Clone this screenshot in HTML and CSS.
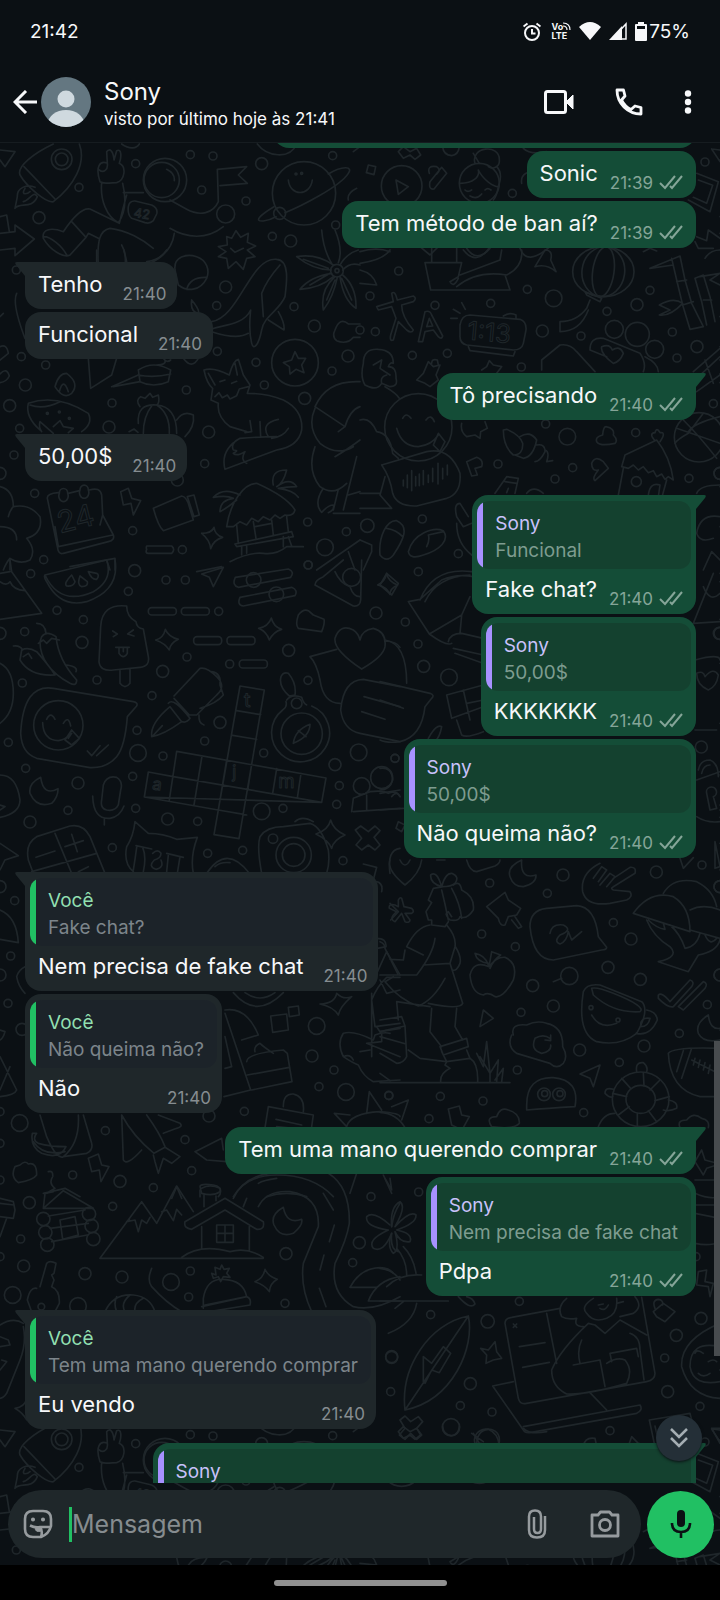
FILE: index.html
```html
<!DOCTYPE html>
<html lang="pt-BR">
<head>
<meta charset="utf-8">
<meta name="viewport" content="width=device-width, initial-scale=1">
<title>Sony</title>
<link rel="stylesheet" href="styles.css">
</head>
<body>
<svg class="defs" aria-hidden="true">
  <symbol id="ticks" viewBox="0 0 24 16"><path d="M1 9l5 5L16 2M11 12l2 2L23 2" fill="none" stroke="currentColor" stroke-width="2"/></symbol>
  <symbol id="tail-out" viewBox="0 0 24 14"><path d="M0 0H22Q25 0 23 3L14 14H0Z" fill="currentColor"/></symbol>
  <symbol id="tail-in" viewBox="0 0 24 14"><path d="M24 0H2Q-1 0 1 3L10 14H24Z" fill="currentColor"/></symbol>
</svg>
<div class="phone">
  <div class="status">
    <span class="clock">21:42</span>
    <div class="status-icons">
      <svg width="18" height="19" viewBox="0 0 18 19" fill="none" stroke="currentColor" stroke-width="2"><circle cx="9" cy="11" r="7"/><path d="M9 7v4.500h3.500M0.500 4.500l4-3M17.500 4.500l-4-3"/></svg>
      <div class="volte"><span>Vo<svg width="8" height="8" viewBox="0 0 8 8" fill="none" stroke="currentColor" stroke-width="1.200"><path d="M0 1Q7 1 7 8M0 4Q4 4 4 8"/></svg></span><span>LTE</span></div>
      <svg width="22" height="18" viewBox="0 0 22 18" fill="currentColor"><path d="M0 5Q11-5 22 5L11 18Z"/></svg>
      <svg width="18" height="18" viewBox="0 0 18 18"><path d="M0 18L13 4V18Z" fill="currentColor"/><path d="M3 17L17 2V17Z" fill="none" stroke="currentColor" stroke-width="1.500"/></svg>
      <span class="battery"><svg width="12" height="19" viewBox="0 0 12 19"><path d="M3 0H9V2H11Q12 2 12 3V18Q12 19 11 19H1Q0 19 0 18V3Q0 2 1 2H3Z" fill="currentColor"/><path d="M2 4H10V7H2Z" fill="#0b1014"/></svg>75%</span>
    </div>
  </div>
  <header class="header">
    <button class="icon-button back" aria-label="Voltar"><svg width="24" height="24" viewBox="0 0 24 24" fill="none" stroke="currentColor" stroke-width="3"><path d="M24 12H2M13 1L2 12L13 23"/></svg></button>
    <svg class="avatar" viewBox="0 0 50 50" aria-hidden="true"><clipPath id="face"><circle cx="25" cy="25" r="25"/></clipPath><g clip-path="url(#face)"><path d="M0 0H50V50H0Z" fill="#647781"/><circle cx="25" cy="22" r="8.500" fill="#cfd9df"/><ellipse cx="25" cy="47" rx="18" ry="14" fill="#cfd9df"/></g></svg>
    <div class="contact"><h1>Sony</h1><p>visto por último hoje às 21:41</p></div>
    <div class="actions">
      <button class="icon-button" aria-label="Chamada de vídeo"><svg width="30" height="24" viewBox="0 0 30 24"><rect x="1.500" y="1.500" width="20" height="21" rx="2" fill="none" stroke="currentColor" stroke-width="3"/><path d="M22 12L29 5V19Z" fill="currentColor" stroke="currentColor"/></svg></button>
      <button class="icon-button" aria-label="Chamada de voz"><svg width="28" height="28" viewBox="0 0 28 28" fill="none" stroke="currentColor" stroke-width="2.800" stroke-linejoin="round"><path d="M2 2H8.500L10 8L6.500 12Q10 19 16 21.500L20 18L26 19.500V26Q16 26 9 19Q2 12 2 2Z"/></svg></button>
      <button class="icon-button" aria-label="Mais opções"><svg width="8" height="24" viewBox="0 0 8 24" fill="currentColor"><circle cx="4" cy="3.500" r="3.200"/><circle cx="4" cy="12" r="3.200"/><circle cx="4" cy="20.500" r="3.200"/></svg></button>
    </div>
  </header>
  <main class="chat">
    <svg class="wallpaper" aria-hidden="true">
      <g transform="translate(0 -143)">
      <g id="doodles">
        <g transform="scale(.33333)">
          <path d="M0 450L45 455L15 500L0 480M160 432C100 460 50 500 60 525C80 560 140 610 160 605C220 560 260 490 238 432M72 500L165 597M105 562C80 550 50 565 52 590L45 625C60 605 95 630 112 590C100 570 90 600 70 605M75 565C60 590 85 580 90 575M0 650L20 645L28 695M0 700L45 695V675L103 717L45 767V745L0 750"/>
          <circle cx="185" cy="478" r="31"/><circle cx="185" cy="478" r="19"/><circle cx="237" cy="562" r="12"/><circle cx="117" cy="653" r="18"/><circle cx="407" cy="491" r="12"/><circle cx="571" cy="464" r="12"/><circle cx="639" cy="468" r="12"/><circle cx="605" cy="570" r="12"/><circle cx="738" cy="603" r="12"/><circle cx="785" cy="491" r="18"/><circle cx="998" cy="467" r="12"/><circle cx="1007" cy="675" r="12"/><circle cx="817" cy="709" r="12"/><circle cx="872" cy="723" r="18"/>
          <circle cx="495" cy="540" r="65"/><circle cx="485" cy="540" r="53"/><circle cx="677" cy="642" r="27"/><circle cx="912" cy="580" r="95"/><circle cx="839" cy="640" r="18"/><circle cx="888" cy="522" r="3"/><circle cx="905" cy="520" r="3"/>
          <path d="M300 545C285 500 300 480 322 490L320 455C330 442 340 455 342 480L350 452C365 445 365 470 358 490C380 500 375 540 350 548C330 550 310 550 300 545M298 510C310 520 325 510 322 490M305 548C300 600 320 650 355 668C375 640 380 600 368 550M370 578H430M380 585C370 620 365 640 358 670L270 627C240 620 200 680 190 695C150 680 125 690 130 715C150 750 190 775 210 765L258 712L265 700L295 715M215 665L258 712M132 710C150 710 185 735 200 765M295 800C290 720 300 690 330 685C380 690 430 720 460 745M365 735Q380 760 375 800M510 600L560 628C600 650 640 640 655 605L652 508L740 500L715 525L742 550L660 557M510 685C560 715 620 720 670 680M523 700Q515 760 450 790M500 508Q525 520 523 542M385 620Q388 602 405 603L455 615Q475 625 470 642L460 662Q450 672 435 668L395 655Q382 645 385 620M985 522C1030 495 1060 500 1045 520C1020 560 900 620 855 638M822 620C780 645 760 665 790 663Q810 660 828 650M865 540C870 590 930 590 937 540M680 710L695 715L708 692L722 712L745 700L742 727L767 738L742 750L765 770L740 775L730 808L708 785L685 805L680 775L655 770L678 755L655 740L682 735ZM692 745L705 757L730 745M365 432C390 450 410 445 418 432M772 432C800 470 870 480 890 432M1060 455L1080 440M1045 600Q1040 580 1070 565"/>
          <text x="400" y="650" font-size="38" transform="rotate(10 400 650)">42</text>
        </g>
        <g transform="translate(360 0) scale(.33333)">
          <path d="M25 495L47 500L42 524L19 518ZM108 540L145 560L115 583ZM115 455L130 440L150 455L170 445L182 465L165 478L150 465L130 475ZM248 440Q250 465 275 467Q295 465 298 440M210 545L245 502L260 520L222 567Q205 570 210 545M208 520Q200 495 230 500Q245 510 230 522M345 490C330 440 420 430 418 480C420 500 400 510 385 500M340 460L358 490M300 550C340 550 360 530 355 510C370 540 400 560 415 560M315 570q8 8 20 0M375 570q8-8 18 0M330 588Q350 600 365 582M410 500Q430 520 415 560Q410 590 400 600M485 550C480 520 510 510 530 518M490 445Q510 465 560 455M1010 520L1075 545L1050 635L985 600M1015 540L1058 556L1040 610L1000 592M1055 447L1080 450M1055 447L1080 485M1010 710L1040 722L1045 690L1080 715M1005 725L1015 745H1060M0 755Q50 740 90 755M180 740L210 765L235 740M310 750Q350 800 390 740M480 745Q500 800 570 740M850 755l20-10l20 8"/>
          <circle cx="125" cy="558" r="61"/><circle cx="358" cy="550" r="60"/><circle cx="457" cy="580" r="12"/><circle cx="1035" cy="486" r="12"/>
        </g>
        <g transform="translate(0 250) scale(.33333)">
          <path d="M525 60C520 20 560 10 590 20C620 30 630 60 620 85C600 125 560 125 535 105ZM560 118Q570 80 620 82M635 215C720 200 750 20 830 28C870 30 860 100 855 140C840 180 790 200 785 240C775 290 760 300 755 280C745 240 750 200 752 180C730 230 650 225 630 240M635 245C680 260 720 265 745 250M840 45Q800 90 785 130L790 200M835 185Q855 220 852 240L805 210M290 0V35M372 0L380 35M500 0Q480 30 440 35M1005 240Q1020 200 1045 222H1080M1080 262H1060Q1040 285 1010 272Q995 260 1005 240M575 150Q600 180 595 190Q570 185 575 150M265 325L272 415L335 375L350 325M335 410L415 375M340 410L420 395M50 130Q35 160 75 265M0 200L10 190M0 330L25 310Q20 280 0 290M0 372Q20 350 28 378Q20 395 0 398"/>
          <path d="M1000 45Q950 10 890 20Q940 60 993 60M995 70Q930 80 900 118Q960 115 1000 80M1003 82Q960 120 970 180Q1000 140 1012 82M1020 80Q1030 150 1068 175Q1070 110 1028 75M1020 45Q1040 10 1075 0M1028 60Q1050 35 1080 45M995 40Q970 0 965-60M1015 38Q1030 0 1005-60M910 28L985 55M930 105L990 70M980 150L1005 90M1055 150L1025 85"/>
          <path d="M85 460Q170 430 265 490Q280 520 245 545M85 460Q75 500 120 540M90 465Q130 480 180 455M165 410Q175 370 200 370Q240 400 215 430Q190 450 165 410M178 425Q190 380 205 425M120 515L160 550M120 515Q115 530 125 545M160 530L180 512L190 530L220 535L205 548M415 520Q410 460 470 465Q530 470 530 550M455 468Q430 500 430 550M470 465Q510 490 508 550M420 470Q405 450 422 440L435 445L450 430L458 442L475 435Q480 460 470 465M530 510Q550 480 580 495Q585 530 555 560M387 545l15-8l12 10M415 360Q460 330 512 360L505 395Q460 415 420 395ZM415 375Q460 385 512 372M470 345Q500 345 495 330M490 325Q500 340 512 330M550 325Q575 360 595 325"/>
          <path d="M612 360Q640 350 688 375Q700 330 715 328L730 375L750 405L742 430Q800 430 850 450Q910 480 905 540Q895 590 830 600L675 658Q660 600 720 565Q780 560 830 560M612 360Q620 400 638 415L633 450L655 460Q650 500 690 530L740 545M625 370L645 405M705 340L712 375M645 440l12-12l10 15l15-8l8 12l20-10l8-20L745 410M720 565Q690 580 700 600Q720 600 700 610Q710 620 735 605Q720 630 740 640M750 512L755 545L735 548M780 515L782 560M805 560Q780 520 835 508M815 565Q850 560 865 535M660 395l15-5M695 400l15-6"/>
          <path d="M945 470Q980 390 1080 395M945 470L1035 530Q1050 480 1080 470M1035 530L1015 545M945 475Q920 530 960 580Q1010 620 1060 590M1005 620Q1040 600 1080 570M945 590Q920 660 960 710Q1000 740 1040 700M1070 620L1030 780M1000 790H1080M970 715Q940 760 965 787Q985 765 1000 765Q1005 780 985 788M1015 718L1000 780M1080 725L1045 735"/>
          <path d="M142 745Q140 730 175 728M205 730L238 722M268 720Q300 710 305 735L308 795L340 855Q345 870 325 875L190 910Q175 915 172 890L142 745M165 830L175 890L338 855M308 795L300 825M178 730a14 17 0 1 0 25 0a12 14 0 1 0-25 0M240 720a14 17 0 1 0 25 0a12 14 0 1 0-25 0M362 725L385 715L395 745L422 752L400 795L393 760L370 765ZM460 775L545 738Q560 740 568 770L580 810L490 842Q475 830 460 775M562 740L582 735L598 795L582 800ZM605 850Q635 850 642 832Q645 855 668 862Q640 870 632 896Q630 870 605 850M440 898a12 12 0 0 1 0-10H515q12 10 0 22H445q-10 0-5-12"/>
          <path d="M680 830C690 760 730 700 770 700Q860 740 885 780Q880 800 855 795L840 805L825 795L810 810L790 800L775 815L755 805L740 825L720 815L700 830ZM705 882L875 845L880 860L710 890ZM710 825L715 880M760 815L768 865M815 810L820 855M860 800L865 845M765 830L815 820M725 890V915M740 885V910M850 860V890M865 860L875 888M690 935Q750 905 790 910Q830 915 860 890H910M820 705Q810 660 860 660Q850 700 830 710Q870 680 890 710Q860 710 835 715Q880 720 895 742M720 735Q670 710 640 742Q680 735 700 745Q660 750 660 785Q680 775 710 750"/>
          <path d="M0 710Q40 720 40 770Q90 760 120 800Q130 850 80 865Q110 900 90 930Q60 945 30 925Q20 935 10 960M0 830Q50 830 50 870M25 800Q30 780 40 770M30 925V960M210 950L345 925V960M320 930L330 960M590 965l75-15M950 960L1080 870M1045 905L1065 960"/>
          <text x="180" y="850" font-size="90" transform="rotate(-14 180 850)">24</text>
          <circle cx="1011" cy="62" r="19"/><circle cx="1011" cy="62" r="6"/><circle cx="677" cy="111" r="18"/><circle cx="650" cy="167" r="12"/><circle cx="882" cy="170" r="12"/><circle cx="943" cy="228" r="18"/><circle cx="885" cy="338" r="70"/><path d="M885 305L895 325L917 325L905 345L912 368L888 358L870 372L868 350L850 338L875 330Z"/><circle cx="652" cy="304" r="12"/><circle cx="768" cy="337" r="12"/><circle cx="793" cy="405" r="12"/><circle cx="996" cy="363" r="12"/><circle cx="1044" cy="318" r="18"/><circle cx="914" cy="445" r="18"/><circle cx="64" cy="320" r="12"/><circle cx="137" cy="345" r="12"/><circle cx="76" cy="405" r="18"/><circle cx="29" cy="467" r="18"/><circle cx="59" cy="535" r="12"/><circle cx="336" cy="459" r="12"/><circle cx="327" cy="531" r="18"/><circle cx="559" cy="420" r="12"/><circle cx="626" cy="546" r="18"/><circle cx="614" cy="641" r="12"/><circle cx="42" cy="615" r="12"/><circle cx="0" cy="670" r="18"/><circle cx="104" cy="730" r="12"/><circle cx="398" cy="842" r="12"/><circle cx="547" cy="899" r="12"/><circle cx="131" cy="929" r="12"/><circle cx="923" cy="816" r="12"/><circle cx="975" cy="892" r="25"/><circle cx="1039" cy="845" r="12"/><circle cx="924" cy="945" r="12"/><circle cx="532" cy="690" r="18"/><circle cx="142" cy="490" r="3"/><circle cx="178" cy="486" r="3"/><circle cx="208" cy="505" r="3"/><circle cx="49" cy="60" r="12"/>
        </g>
        <g transform="translate(360 250) scale(.33333)">
          <path d="M0 40Q70 30 90 0M0 60Q40 70 50 105L0 100M195 38H305L295 80L270 95Q280 115 295 85M195 38L212 120H450L435 75M300 75L420 30L425 0M290 110Q350 60 440 75Q490 50 485 0M215 38V-30M290 38V-30M320-5Q350 40 390-5M525 50L555 0Q580 0 572 30L588 65Q560 40 525 50"/>
          <ellipse cx="730" cy="65" rx="92" ry="75"/><ellipse cx="730" cy="65" rx="32" ry="75" transform="rotate(8 730 65)"/><ellipse cx="730" cy="65" rx="64" ry="75" transform="rotate(8 730 65)"/>
          <path d="M675 125L725 145L720 155L680 135ZM690 150L680 175Q650 215 600 215V245Q660 245 685 180M870 55L960 18L975 90L995 160L1030 230L990 238L968 165L950 90L935 25M870 55L940 45M950 95L980 90M968 165L1000 155M1005 85L1030 75L1050 140L1065 215M1005 85L1025 155L1040 225M1030 150H1055M898 165Q940 140 968 160Q930 200 898 195L930 180ZM1020 80L1080 70L1050 90L1080 105M1035 25Q1050 0 1080 0"/>
          <path d="M50 170L100 155L95 130Q105 120 112 150L160 138Q172 145 160 155L125 165Q125 200 160 240Q155 252 140 240L115 215L100 270Q88 275 92 255L108 205L95 170L55 180ZM175 275L195 185Q210 180 215 195L248 258Q245 270 235 260L220 240L195 245L188 275ZM200 230L208 205L218 228ZM280 178L300 190M305 158L316 178M272 205H292M300 225Q305 195 330 195L480 208Q500 215 498 240L490 280Q485 300 460 300L320 285Q298 280 300 255ZM325 290L330 302L460 318L465 305M430 198Q450 185 468 195V208"/>
          <text x="320" y="268" font-size="76" transform="rotate(5 320 268)">1:13</text>
          <path d="M10 340Q10 295 55 298Q100 300 100 340Q90 335 85 350Q110 350 108 385Q115 410 90 410L65 400Q50 425 15 405Q0 380 10 340M40 345L65 330L60 355L90 375M80 375Q60 380 65 400M75 410Q110 430 118 445M205 335L220 350L240 345L228 375L235 390L210 410L195 400L170 390L190 370ZM215 340Q215 325 232 330L235 345M365 360L380 350L388 332L400 345L425 350L410 370M545 360V330L600 285Q630 280 650 305L705 365M690 300Q690 260 730 265L840 310Q860 340 850 365M690 300L740 320M760 340Q720 310 725 290Q750 280 757 300Q780 285 790 310Q780 335 760 340M855 320Q895 340 895 365M1000 365L1080 295M1010 385L1080 320M1010 425L1080 375M1035 330L1060 400"/>
          <circle cx="763" cy="238" r="27"/><circle cx="832" cy="253" r="36"/><circle cx="884" cy="298" r="27"/><circle cx="116" cy="63" r="12"/><circle cx="30" cy="138" r="12"/><circle cx="225" cy="166" r="12"/><circle cx="392" cy="160" r="12"/><circle cx="502" cy="118" r="12"/><circle cx="581" cy="145" r="25"/><circle cx="741" cy="184" r="12"/><circle cx="831" cy="164" r="18"/><circle cx="870" cy="121" r="12"/><circle cx="937" cy="246" r="12"/><circle cx="1011" cy="290" r="18"/><circle cx="951" cy="324" r="12"/><circle cx="663" cy="258" r="12"/><circle cx="547" cy="243" r="18"/><circle cx="484" cy="351" r="12"/><circle cx="157" cy="316" r="12"/><circle cx="262" cy="310" r="12"/><circle cx="46" cy="245" r="12"/><circle cx="0" cy="240" r="12"/>
          <circle cx="175" cy="532" r="101"/><path d="M128 505q10-20 25 0M198 510q15-20 25 5M110 535Q125 590 175 590Q215 585 235 555M220 585L235 550L255 575L240 605ZM65 645Q150 620 200 605Q270 590 300 670Q305 730 260 745L170 768Q110 770 98 730Q90 680 65 645M130 690v18M142 675v38M155 662v60M167 680v28M178 672v35M190 662v42M205 675v22M218 655v40M234 640v62M248 655v32M262 645v30M0 510Q30 500 50 545Q90 550 98 610L115 625M75 680L60 735L95 775H0M0 730H60M305 520Q300 545 320 560L345 555L360 565L362 545L382 535L375 515M430 540L440 538Q480 555 488 580Q490 615 460 615Q430 590 430 540M480 560Q510 540 530 570Q520 620 490 625L465 615M530 585Q555 580 555 605Q540 635 525 635M555 600Q570 605 560 635L578 632M320 635L350 622Q372 630 365 650L345 655L352 675L335 678ZM695 640Q705 615 730 635L745 655L705 692Q695 685 715 660Q695 665 695 640M710 575Q705 560 728 555Q730 530 738 530Q765 535 760 555Q775 570 765 580Q720 590 710 575M785 650L795 615L890 570Q930 620 940 690L925 680L915 688L905 672L890 680L880 662L865 668L850 650L835 660L820 645L805 655ZM790 655L775 735M920 690L905 745M865 735Q870 695 900 705L895 740M885 572Q865 550 885 548Q890 530 900 548Q920 545 900 575M405 730L440 680L475 685L465 730M435 695L470 700M445 715L440 728M500 730Q520 705 550 730M1010 730Q1020 705 1080 705"/>
          <circle cx="829" cy="695" r="15"/><circle cx="1017" cy="562" r="74"/><path d="M950 535L1080 580M970 510Q1020 560 1070 625M1030 490L985 550Q950 570 945 580M1080 500Q1000 520 985 545"/>
          <circle cx="557" cy="522" r="12"/><circle cx="622" cy="560" r="25"/><circle cx="827" cy="548" r="12"/><circle cx="414" cy="642" r="12"/><circle cx="585" cy="687" r="12"/><circle cx="638" cy="653" r="12"/><circle cx="987" cy="685" r="12"/><circle cx="1060" cy="461" r="12"/><circle cx="1080" cy="670" r="18"/><circle cx="22" cy="827" r="20"/><circle cx="187" cy="807" r="12"/><circle cx="295" cy="911" r="12"/>
          <path d="M60 915C55 860 80 810 110 812C150 830 130 870 100 915Q80 940 60 915M80 835Q110 840 128 860M145 905C160 850 220 830 250 842C270 870 240 900 190 915Q150 930 145 905M200 890Q210 870 205 855L250 845M290 800L310 830L335 820M290 800Q280 760 300 760L325 800M290 820Q290 880 335 915M0 870L35 885V905L10 960M1080 800Q1020 790 1010 850Q1020 880 1060 865M1080 930L1055 905L1030 960"/>
        </g>
        <g transform="translate(0 560) scale(.33333)">
          <path d="M30 0L35 35L125 160L0 178M0 40L30 35M0 65Q20 80 30 65Q40 90 75 92M135 45L320 0Q340 60 280 95Q180 140 135 45M135 45Q130 50 140 65Q180 145 260 125Q360 90 345 0M215 45Q190 70 200 78Q220 80 225 65ZM240 48Q230 75 245 80Q265 80 262 65ZM265 35Q275 60 290 58Q300 45 290 40ZM605 42L670 22L640 80L628 52ZM706 52L865 27Q885 35 872 52L715 82Q695 75 706 52M720 112L875 82Q895 90 885 107L730 138Q710 135 720 112M945 75Q945 60 970 50L1030 0M945 75L1060 138Q1080 140 1082 120L1085 0M1005 35Q1020 70 1050 80Q1060 110 1080 110M1133 75Q1155 65 1160 40Q1165 65 1193 75Q1170 85 1170 103Q1160 80 1133 75"/>
          <rect x="445" y="143" width="84" height="22" rx="10"/><rect x="544" y="143" width="84" height="22" rx="10"/><rect x="581" y="230" width="84" height="24" rx="10"/><rect x="681" y="230" width="84" height="24" rx="10"/><rect x="718" y="300" width="84" height="24" rx="10"/><circle cx="656" cy="154" r="12"/><circle cx="689" cy="312" r="12"/><circle cx="761" cy="60" r="22"/><circle cx="829" cy="103" r="22"/><circle cx="1055" cy="52" r="27"/>
          <path d="M467 240Q490 235 496 208Q505 230 535 238Q510 250 508 270Q495 250 467 240M776 205Q805 200 814 174Q820 200 845 208Q820 215 808 240Q800 215 776 205M895 165Q910 145 925 152L940 165L972 178Q975 190 965 215L895 205Q885 195 895 165M380 138Q305 130 302 200L297 305Q300 335 340 330L420 322Q450 320 445 290L430 207Q410 205 408 185Q380 170 380 138M360 330V370Q375 390 390 370V328M338 213L352 222L340 230M400 210L383 222L402 228M347 262H388M357 262V280Q370 300 382 280V262M370 262V275"/>
          <path d="M125 230Q140 210 168 230Q175 300 230 360Q230 380 210 370Q120 320 120 245ZM110 190Q135 190 138 220M115 250L130 240L140 250L155 235L178 240M65 270Q85 260 110 275Q150 320 165 345Q90 350 60 300ZM40 258Q60 255 68 270M70 290L85 280L95 295M200 315Q235 320 228 335M0 310Q40 330 40 400Q40 460 0 490"/>
          <path d="M62 520Q70 370 160 385L400 425Q415 428 410 438L382 470Q375 560 350 590Q320 625 270 623L110 595Q65 580 62 520M140 478q12-25 25 0M190 490q15-25 22 8M128 488Q130 540 175 542Q200 538 210 520M195 540L215 510L238 535L215 555ZM205 535L215 520M262 573L275 587L300 557M290 587L325 555"/><circle cx="175" cy="496" r="74"/>
          <path d="M455 530Q450 490 510 440L545 485Q490 525 455 530M458 528L487 497M505 430Q520 410 570 475Q560 490 545 485M522 408L600 325Q620 320 650 350Q680 380 650 405L590 465L568 465L522 415M635 335Q665 340 660 375L670 405Q650 430 600 445M597 465Q595 490 612 495"/>
          <path d="M720 378L793 390L717 836L642 824ZM710 452L782 464M698 526L770 538M530 574L978 654L965 727L433 711L445 636L520 650M530 574L508 720M606 588L582 735M680 600L655 750L727 762M755 613L743 690M830 626L818 700M903 640L892 714M520 650L965 727M433 711L740 765"/>
          <text x="732" y="440" font-size="60">t</text><text x="697" y="655" font-size="50">j</text><text x="455" y="688" font-size="50" transform="rotate(8 455 688)">a</text><text x="835" y="685" font-size="56">m</text>
          <path d="M843 350Q850 335 865 340Q890 370 885 405L868 408Q835 380 843 350M860 420Q875 400 905 412Q910 430 920 435M858 425Q862 440 850 448M880 550Q885 510 930 493Q930 530 880 550M895 512L918 530M848 450A87 87 0 1 0 935 438M930 290L1010 268M930 290Q950 310 960 360Q970 430 1020 430M1155 243Q1190 245 1200 262M1085 327Q1000 270 1005 235Q1020 190 1060 210Q1075 220 1080 240Q1085 210 1120 205Q1160 215 1155 260Q1150 290 1085 327M1200 380L1090 358Q1030 360 1022 450Q1030 510 1080 520L1200 545M1092 410L1200 440M1085 455L1155 478"/><circle cx="905" cy="521" r="62"/><circle cx="890" cy="430" r="16"/>
          <path d="M0 645Q50 645 60 720Q60 760 0 772M0 735L15 740L0 750M122 652Q85 670 90 700Q110 745 155 730Q175 710 174 686Q130 710 122 652M305 720L310 675Q320 645 350 652Q370 665 362 690L355 735Q345 755 320 750Q300 745 305 720M278 708Q280 780 330 775Q360 770 372 738M313 775V795M85 900Q75 850 110 830L210 798Q250 790 270 830L315 940M85 900L100 940M165 820L215 940M95 935L290 880M108 892L165 873M195 860L250 842M215 823L232 875M235 935L265 920M0 850L55 887L15 900L0 930"/>
          <path d="M400 935Q370 910 380 860Q400 830 405 785L445 820Q490 820 530 838L592 832Q570 890 580 940M408 857L455 867M428 862Q440 890 430 935M410 862Q405 900 400 930M500 880L550 892M505 885L500 935M540 890L532 940M458 880q15-15 25 0q0 15-20 20q-20 20 5 28q25-5 15-28M620 940Q680 850 748 940M645 920Q660 905 690 908M785 940Q770 860 780 830Q800 800 850 800L930 790Q965 800 985 870Q990 910 980 940M885 785Q905 765 940 785M948 822Q985 810 992 780Q1000 810 1035 825Q1000 840 995 865Q985 840 948 822M1066 810L1082 798L1105 815L1125 798L1140 812L1122 832L1140 855L1125 870L1105 855L1085 870L1068 855L1085 835ZM1090 912L1130 922L1120 960M1200 865Q1160 870 1170 940M1055 755L1060 715L1110 695M1060 755L1200 745M1100 705V748M1110 695Q1150 690 1165 700Q1190 690 1200 710"/>
          <circle cx="881" cy="885" r="53"/><circle cx="881" cy="885" r="34"/><circle cx="819" cy="836" r="14"/><circle cx="1085" cy="678" r="25"/><circle cx="1145" cy="653" r="33"/>
          <circle cx="92" cy="41" r="12"/><circle cx="404" cy="32" r="18"/><circle cx="385" cy="94" r="12"/><circle cx="498" cy="60" r="12"/><circle cx="556" cy="60" r="12"/><circle cx="171" cy="151" r="12"/><circle cx="250" cy="179" r="12"/><circle cx="74" cy="215" r="12"/><circle cx="246" cy="247" r="18"/><circle cx="0" cy="220" r="18"/><circle cx="291" cy="360" r="12"/><circle cx="67" cy="369" r="12"/><circle cx="488" cy="334" r="18"/><circle cx="561" cy="291" r="12"/><circle cx="456" cy="407" r="12"/><circle cx="411" cy="511" r="12"/><circle cx="660" cy="487" r="18"/><circle cx="614" cy="543" r="12"/><circle cx="414" cy="579" r="25"/><circle cx="489" cy="588" r="12"/><circle cx="398" cy="649" r="12"/><circle cx="407" cy="745" r="12"/><circle cx="234" cy="669" r="18"/><circle cx="77" cy="625" r="12"/><circle cx="25" cy="547" r="12"/><circle cx="204" cy="751" r="12"/><circle cx="90" cy="786" r="18"/><circle cx="337" cy="863" r="12"/><circle cx="503" cy="777" r="18"/><circle cx="593" cy="784" r="12"/><circle cx="623" cy="880" r="12"/><circle cx="728" cy="871" r="12"/><circle cx="785" cy="754" r="25"/><circle cx="849" cy="745" r="12"/><circle cx="791" cy="579" r="12"/><circle cx="866" cy="271" r="18"/><circle cx="924" cy="361" r="12"/><circle cx="1128" cy="159" r="18"/><circle cx="925" cy="15" r="12"/><circle cx="1076" cy="577" r="25"/><circle cx="1005" cy="614" r="18"/><circle cx="1018" cy="677" r="12"/><circle cx="1010" cy="733" r="12"/><circle cx="1029" cy="902" r="12"/><circle cx="1185" cy="595" r="12"/>
        </g>
        <g transform="translate(380 560) scale(.33333)">
          <path d="M0 75L20 40L55 70L35 105ZM120 120Q160 20 275 35M135 125Q170 50 270 45M85 125L120 118L185 60Q230 40 280 50M85 125L148 222L245 165L240 220M148 222Q200 260 215 250M205 245Q210 220 245 220L310 235M220 265L310 285M225 280L305 308M245 165L270 110M15 240Q80 250 80 370M0 365L150 400Q165 405 155 415L135 440Q125 530 60 545Q20 550 0 540M0 420L70 445M200 405L310 375M200 405L215 475L310 440M250 390L270 480M230 480L245 525Q260 535 310 515M260 430L310 420M145 535Q170 490 185 500Q180 530 165 545M0 625Q35 620 38 660Q30 690 0 690M0 700L60 690M0 750L70 745M35 710Q50 690 60 710M55 785L75 795L65 815L48 805Z"/>
          <path d="M1000 40L940 190L1020 185M970 80Q990 130 1020 100M945 300Q1020 280 1020 300M945 510H1010M950 340Q970 330 975 350Q1000 320 1015 345Q1010 380 985 390Q950 375 950 340M955 630Q960 600 990 600Q1015 610 1015 650M965 640Q970 615 990 615M950 660L1020 635M980 700a15 15 0 1 1 20 10L1010 745L990 750ZM950 770Q980 790 1020 785M900 895L910 925L940 893M1005 845L1020 920L1005 925Z"/>
          <circle cx="115" cy="35" r="12"/><circle cx="76" cy="186" r="12"/><circle cx="114" cy="252" r="12"/><circle cx="131" cy="319" r="18"/><circle cx="207" cy="352" r="25"/><circle cx="45" cy="595" r="12"/><circle cx="964" cy="561" r="18"/><circle cx="1018" cy="220" r="18"/>
        </g>
        <g transform="translate(0 860) scale(.33333)">
          <path d="M0 150Q50 170 55 248L0 238M75 320Q55 330 50 350Q55 380 75 400M0 510L15 515Q10 535 0 540M0 590L50 690Q45 705 0 710M30 620L0 690M1170 130L1195 155L1172 180M1130 65Q1150 70 1145 95M1130 235Q1160 235 1158 260L1132 265M1130 340L1160 275L1200 345M1200 352H1160Q1130 380 1115 420L1125 500L1200 490M1115 400V590M1130 500L1140 515L1200 505M1140 360L1160 400L1200 390M1170 520Q1150 515 1125 525L1120 540Q1060 510 1030 520Q1010 550 1030 590Q1060 610 1075 615Q1090 650 1120 665L1200 660M1030 590Q1050 580 1060 600M1145 520V545L1100 550L1200 590M1080 575L1110 570"/>
          <path d="M700 398Q770 480 850 398M735 398Q780 430 825 398M960 432Q1005 430 1010 400Q1030 420 1055 410Q1020 440 1015 465Q1000 440 960 432M675 450Q740 440 775 525L725 540M675 460L752 690L672 710M675 530L695 620L675 625M765 575Q760 560 780 550Q790 560 820 580M740 605Q740 580 850 570L862 580L876 665L755 690M742 645L868 622M812 468L860 462L865 510L818 517ZM865 442L895 438L898 465L868 470ZM795 803L805 740L940 765L935 800M828 778L905 795M830 800L880 805M850 740Q850 700 880 702Q915 710 910 755M1003 760L1050 765M1003 760L1040 800M1108 695L1100 760M1108 695L1145 750M1040 800Q1050 760 1140 755Q1200 760 1200 770M120 765L140 830Q170 900 190 890L260 880Q280 870 275 850L250 765M190 890Q240 850 235 765M365 765L370 900Q380 920 425 870M365 765Q400 830 462 880M440 765Q480 820 495 860M475 765L540 790Q550 800 530 805L490 820M462 880L495 862L540 890L515 910L490 895L475 940L465 905L460 885M97 820Q90 860 125 880Q180 900 198 860Q150 860 115 850Q95 840 110 820ZM100 845Q130 890 195 875M585 875L665 835L670 870M585 875L620 900L680 905M265 895L295 882L305 915L327 920L303 965L298 930L275 935ZM60 915Q75 900 85 912Q110 905 110 945Q100 960 55 968Q30 950 45 920ZM145 935Q160 930 158 950Q145 970 165 985L140 1000M130 1000L195 985L240 1010M605 985Q630 970 660 985Q665 1000 655 1010M600 990V1010M515 1015L530 980L545 1015M700 1010Q740 945 830 945Q940 945 1000 1010M775 970Q790 960 830 955M800 1010Q860 990 920 1010M1050 1000L1070 940M1175 1000L1150 945"/>
          <circle cx="44" cy="122" r="12"/><circle cx="32" cy="288" r="12"/><circle cx="0" cy="345" r="18"/><circle cx="24" cy="430" r="12"/><circle cx="66" cy="508" r="18"/><circle cx="0" cy="80" r="18"/><circle cx="950" cy="498" r="25"/><circle cx="936" cy="588" r="18"/><circle cx="1002" cy="630" r="12"/><circle cx="957" cy="680" r="12"/><circle cx="1038" cy="696" r="25"/><circle cx="1166" cy="706" r="12"/><circle cx="733" cy="754" r="12"/><circle cx="627" cy="768" r="18"/><circle cx="59" cy="789" r="25"/><circle cx="316" cy="812" r="12"/><circle cx="555" cy="839" r="12"/><circle cx="575" cy="932" r="12"/><circle cx="218" cy="945" r="12"/><circle cx="360" cy="964" r="18"/><circle cx="460" cy="983" r="12"/><circle cx="0" cy="850" r="12"/><circle cx="0" cy="755" r="12"/><circle cx="0" cy="960" r="12"/>
        </g>
        <g transform="translate(380 860) scale(.33333)">
          <path d="M30 0Q20 30 75 75Q120 40 125 0M60 0Q75 30 90 0M170 0H195M260 0Q270 35 290 35L345 18Q360 10 360 0M425 0Q380 20 390 50Q400 80 430 80Q470 70 468 45Q420 60 425 0M660 10Q600 40 608 95Q620 140 690 130L740 120Q760 110 750 95L700 90Q690 85 700 80L765 40Q770 20 750 22L700 55M640 55L665 20L680 30L655 65M660 75L690 40L705 50L680 80M65 115L72 140L95 145Q105 155 95 160H75L90 180Q90 190 75 185L65 160L45 185Q30 180 40 165L50 155L28 145Q25 130 45 135L55 140V120Q60 110 65 115"/>
          <path d="M185 80Q150 70 152 45Q170 30 185 80Q195 40 215 40Q240 50 225 70Q215 80 185 80M190 80L160 85L145 120L155 128L138 155L145 180L155 180V195L195 200L205 185M185 90Q195 130 205 180M215 85Q240 130 245 175M220 75Q240 60 245 90Q285 110 280 150Q260 180 240 170Q235 185 210 180Q190 160 205 155L215 170M150 195Q110 200 80 260L130 285M200 195Q230 230 225 260L210 310L130 315M165 235Q160 280 110 345L0 345M75 270L70 300L30 298M225 258Q245 290 240 310Q230 335 218 330M210 310L248 430Q240 450 145 430M195 355Q160 420 115 438Q60 420 15 365L40 350M0 245Q15 250 15 265L55 345M155 445L150 515L185 560M230 445L225 500L248 540M180 560L260 535L265 560L190 585ZM185 575L200 605L270 595L260 570M200 605L195 615L210 625Q180 640 182 665M270 595Q295 610 293 665M50 425L150 440M50 425L55 480M0 480L65 470L75 498L0 515M0 530L78 552M75 498L80 590Q70 610 50 610L0 580M85 570L120 595L200 605M0 668H390M0 640L30 662M290 580L310 620L320 545L330 640L355 600L350 665M300 590L330 640V665M345 660L370 625L365 665"/>
          <path d="M320 140L375 97L385 120L422 145L410 165L385 170L375 195Q360 200 355 175L335 155ZM395 180L415 205L425 200L405 170M450 200Q450 150 500 145L590 137Q645 140 655 230L680 262Q680 270 665 270L520 300Q460 300 450 200M510 220Q515 190 550 195Q580 210 540 225Q520 245 540 252Q560 245 565 215L575 240L605 215M327 320Q280 300 270 345Q275 400 310 405Q325 395 345 410Q370 415 400 360Q415 310 375 292Q350 290 327 320M325 315Q315 285 285 280Q290 305 325 310M327 320L335 275L362 285Q340 300 330 325M545 355L520 365M310 450L340 475L300 500ZM400 525Q390 490 440 495Q470 480 500 490Q550 500 548 560Q565 590 550 610Q530 630 510 610L410 580Q380 560 395 525M510 535Q490 520 465 535Q450 570 485 580Q515 575 512 555M512 525V542L495 540M610 395Q620 370 660 375L785 425Q810 450 770 520Q720 560 650 545Q590 520 610 395M635 385Q650 380 700 400Q800 440 780 455Q700 460 640 405ZM800 450Q830 455 832 480Q810 530 768 520M782 500Q780 470 810 475Q805 500 782 500M635 465Q660 510 710 490"/>
          <path d="M760 160Q810 90 880 110Q930 140 930 215ZM850 100Q880 50 950 65Q1000 90 1010 140M930 150Q970 130 1020 150M930 210L1020 235M800 180Q820 230 870 260Q900 290 835 305L925 335L955 285Q1010 275 1020 240M805 180Q830 205 855 208L850 190M870 195Q900 220 915 265Q950 260 960 220M975 225Q990 260 1010 235M835 405Q845 395 870 425L930 360Q945 365 935 380L880 440Q865 445 835 415ZM895 440L970 365Q985 370 975 385L910 450ZM985 465Q945 490 955 520Q970 550 1020 540M985 465Q990 510 1020 505M865 580Q880 560 1020 565M865 580Q870 690 960 710H1020M935 565L905 655M910 572L890 635M935 600L1005 635M945 595L940 615M960 600L955 622M975 608L970 630M990 615L985 640M600 642L660 615L640 680L630 655ZM440 735Q440 650 520 653Q600 660 585 740Q500 745 440 750Z"/>
          <ellipse cx="782" cy="718" rx="85" ry="82"/><ellipse cx="782" cy="718" rx="44" ry="42"/><path d="M770 635Q765 605 790 608Q805 620 800 635M700 688Q675 680 675 700Q690 715 698 710M865 720Q895 725 890 745Q870 755 850 750M655 800Q670 760 705 760M790 638L792 678M840 660L810 690M868 710L825 722M830 785L805 752M772 800V760M715 765L748 740M698 700L740 710M725 655L752 685M0 757Q50 760 75 803M35 740L85 720L65 780M205 747L238 738L245 765L268 770L250 803M205 747L215 795L232 803M335 800Q315 770 350 770Q360 740 385 750Q420 760 418 790Q400 810 335 800M900 803Q890 780 920 780Q940 755 965 775Q990 780 985 803"/>
          <circle cx="492" cy="703" r="19"/><circle cx="537" cy="703" r="19"/><circle cx="494" cy="701" r="9"/><circle cx="540" cy="701" r="9"/><circle cx="633" cy="443" r="6"/><circle cx="714" cy="480" r="6"/><circle cx="549" cy="45" r="18"/><circle cx="329" cy="69" r="12"/><circle cx="502" cy="100" r="12"/><circle cx="829" cy="36" r="18"/><circle cx="966" cy="15" r="12"/><circle cx="700" cy="188" r="12"/><circle cx="753" cy="237" r="18"/><circle cx="305" cy="222" r="12"/><circle cx="406" cy="260" r="12"/><circle cx="458" cy="377" r="18"/><circle cx="568" cy="348" r="26"/><circle cx="684" cy="322" r="18"/><circle cx="781" cy="358" r="18"/><circle cx="520" cy="438" r="18"/><circle cx="423" cy="457" r="12"/><circle cx="599" cy="570" r="18"/><circle cx="792" cy="558" r="18"/><circle cx="898" cy="520" r="12"/><circle cx="982" cy="434" r="12"/><circle cx="718" cy="607" r="12"/><circle cx="412" cy="630" r="12"/><circle cx="611" cy="758" r="12"/><circle cx="309" cy="723" r="12"/><circle cx="181" cy="709" r="12"/><circle cx="147" cy="776" r="12"/><circle cx="27" cy="707" r="12"/><circle cx="1020" cy="345" r="18"/><circle cx="1020" cy="80" r="18"/>
          <path d="M945 905L965 870L975 900L1020 912L980 925L970 945ZM15 955L35 990L30 955"/>
        </g>
        <g transform="translate(0 1180) scale(.33333)">
          <path d="M0 55L40 65L45 90L40 115L0 110M0 70L42 75M20 115L0 170M130 85L190 32L280 85ZM145 108L255 90M150 145L265 130M155 185L262 165M180 120L225 110L235 165L188 178ZM130 85L135 40L160 35M300 235L425 65L470 130L530 18L580 95M300 235H790M388 118L380 125L405 120L415 155L425 120L440 130L450 112M485 95L500 90L520 122L530 88L545 105M555 125L675 55L790 125Q795 150 770 148L675 90L575 148Q550 145 555 125M605 140V205M748 140V210M650 135H700V187H650ZM675 135V187M650 160H700M545 232Q600 190 690 215Q740 200 790 232M600 20Q600 10 640 15Q665 20 660 35Q640 50 605 40ZM612 45V80M648 48V62M700 55Q730-10 810-20M775 80Q800 30 870 35Q960 50 955 140L910 250Q900 320 935 395M985-20Q1050 20 1048 130Q1040 180 1005 250Q990 340 1060 380Q1120 395 1200 350M730 80L740 55M970 40L1000 90M1003 135L988 185M972 225L960 270M958 325L978 380M850 82Q810 105 822 135Q840 175 880 160Q910 135 905 118Q860 135 850 82M1175 140Q1180 100 1200 70M1170 135Q1120 90 1100 110Q1095 140 1165 150Q1100 180 1120 205Q1150 220 1175 160Q1170 210 1195 215M1050 322Q1080 265 1140 263Q1170 265 1180 280M1050 322H1130M1105 363Q1130 300 1200 290M1105 363H1200"/>
          <path d="M120 320L140 250Q150 240 168 250L162 280L155 285L162 300L155 320M110 325Q90 320 82 360L95 395M155 320Q180 330 178 370L165 395M315 395Q340 340 400 345Q450 350 465 395M350 350Q340 370 350 395M390 345Q360 370 375 395M430 355Q400 370 405 395M455 265Q440 300 455 320Q500 370 545 395M610 385V355Q620 295 670 298Q730 300 740 350L615 375M605 380L740 350Q755 355 750 375L610 398M640 295L635 280L648 285L645 262L660 268L665 255L672 268L688 265L680 280L690 292L670 290L662 305L655 290ZM765 305Q790 295 795 268Q805 290 832 298Q810 310 808 335Q795 315 765 305M0 435Q40 410 70 430M70 440Q80 490 60 540L20 640Q10 655 0 655M0 470L25 480L30 495L0 500M5 540L20 545L0 570M45 685Q75 680 80 655M45 685Q70 700 80 720"/>
          <circle cx="130" cy="117" r="20"/><circle cx="136" cy="157" r="20"/><circle cx="142" cy="194" r="20"/><circle cx="267" cy="102" r="20"/><circle cx="275" cy="138" r="20"/><circle cx="280" cy="177" r="20"/><circle cx="124" cy="380" r="10"/><circle cx="88" cy="68" r="18"/><circle cx="338" cy="79" r="12"/><circle cx="62" cy="177" r="12"/><circle cx="71" cy="258" r="18"/><circle cx="38" cy="345" r="25"/><circle cx="255" cy="281" r="18"/><circle cx="366" cy="291" r="18"/><circle cx="234" cy="378" r="25"/><circle cx="513" cy="306" r="25"/><circle cx="571" cy="273" r="12"/><circle cx="566" cy="351" r="12"/><circle cx="855" cy="370" r="12"/><circle cx="858" cy="221" r="18"/><circle cx="1078" cy="188" r="18"/><circle cx="1058" cy="248" r="12"/><circle cx="1113" cy="50" r="12"/><circle cx="0" cy="230" r="12"/><circle cx="1175" cy="532" r="18"/><circle cx="1172" cy="635" r="12"/>
        </g>
        <g transform="translate(380 1180) scale(.33333)">
          <path d="M35 140Q30 80 60 65Q80 80 45 140Q90 90 108 105Q110 130 50 150Q100 160 90 185Q60 190 45 155Q60 210 40 220Q20 200 35 160M70 200Q100 230 108 280M50 205Q80 240 80 285M0 265Q40 270 60 300M20 320Q60 280 125 285M0 363H205M45 385L70 365M110 370Q100 430 25 460M235 350Q270 390 285 372Q280 355 260 350M945 0H1020M945 40Q990 60 1020 50M945 75H1020M945 100L1020 115M945 190Q990 200 1020 185M955 275L980 270L975 305L1000 310L990 350L985 320L950 315ZM75 690C60 560 150 430 265 408C285 500 220 660 75 690M75 690L265 408M130 610V530L155 550L190 500L212 520L178 578L155 570L135 610M302 505L325 510L345 485L350 515L365 535L340 540L318 550L320 525ZM60 720L75 708L92 725L115 710L128 725L110 745L125 765L110 778L92 760L75 778L58 765L75 745Z"/>
          <path d="M375 430Q375 415 395 412L540 385M785 352L825 580Q825 600 800 605L440 670Q420 675 415 655L375 430M500 400L530 550M418 500L495 488M428 562L508 547M400 432L410 442M410 432L400 442M400 605L338 618L430 750Q435 760 450 758L770 700Q790 690 780 675L430 740M630 638L680 690M560 355Q530 380 545 410Q560 420 590 415Q580 440 610 440M640 355Q600 380 620 400Q640 430 680 415Q715 400 710 355M710 370L730 365M765 350Q790 380 760 400L720 410M655 375L670 372M660 385Q675 395 685 375M625 430L645 435L675 460L720 420L800 465M625 430Q540 510 515 570Q515 620 560 642Q620 645 740 610Q760 570 735 540Q710 530 680 550M605 480Q590 510 600 550M580 555L660 540L675 620M695 545L690 520L770 505L775 530M750 460Q780 470 780 510L792 600M820 395L850 370L885 395L855 425L830 410ZM825 385Q815 360 835 358Q850 360 848 375M1020 430Q900 480 905 560Q930 650 1020 655M1020 500Q930 480 930 560Q940 620 1020 605M945 520Q950 505 970 520M985 545q15-10 25 0M955 580Q970 595 990 580M808 720L930 700L935 720M808 720L825 800M825 738L830 760M275 760L310 785M290 798Q290 750 325 748Q355 760 358 798M610 798Q615 770 645 775L650 798M745 798L755 770L775 790L810 798M995 745H1020M995 745L1020 790"/>
          <circle cx="116" cy="36" r="12"/><circle cx="418" cy="364" r="12"/><circle cx="152" cy="404" r="12"/><circle cx="323" cy="424" r="20"/><circle cx="271" cy="611" r="18"/><circle cx="241" cy="677" r="12"/><circle cx="336" cy="696" r="12"/><circle cx="213" cy="742" r="26"/><circle cx="690" cy="752" r="12"/><circle cx="863" cy="635" r="18"/><circle cx="960" cy="679" r="12"/><circle cx="854" cy="534" r="12"/><circle cx="889" cy="466" r="18"/><circle cx="963" cy="415" r="18"/><circle cx="948" cy="230" r="12"/><circle cx="35" cy="530" r="18"/>
        </g>
      </g>
      <use href="#doodles" y="1280"/>
      <use href="#doodles" x="720"/>
      <use href="#doodles" x="720" y="1280"/>
      </g>
    </svg>
    <div class="scroller">
      <ol class="messages">
        <li class="bubble out stub"></li>
        <li class="bubble out"><div class="line"><span class="text">Sonic</span><span class="meta"><time>21:39</time><svg class="ticks"><use href="#ticks"/></svg></span></div></li>
        <li class="bubble out"><div class="line"><span class="text">Tem método de ban aí?</span><span class="meta"><time>21:39</time><svg class="ticks"><use href="#ticks"/></svg></span></div></li>
        <li class="bubble in first"><svg class="tail"><use href="#tail-in"/></svg><div class="line"><span class="text">Tenho</span><span class="meta"><time>21:40</time></span></div></li>
        <li class="bubble in"><div class="line"><span class="text">Funcional</span><span class="meta"><time>21:40</time></span></div></li>
        <li class="bubble out first"><svg class="tail"><use href="#tail-out"/></svg><div class="line"><span class="text">Tô precisando</span><span class="meta"><time>21:40</time><svg class="ticks"><use href="#ticks"/></svg></span></div></li>
        <li class="bubble in first"><svg class="tail"><use href="#tail-in"/></svg><div class="line"><span class="text">50,00$</span><span class="meta"><time>21:40</time></span></div></li>
        <li class="bubble out first"><svg class="tail"><use href="#tail-out"/></svg><blockquote><cite>Sony</cite><p>Funcional</p></blockquote><div class="line"><span class="text">Fake chat?</span><span class="meta"><time>21:40</time><svg class="ticks"><use href="#ticks"/></svg></span></div></li>
        <li class="bubble out"><blockquote><cite>Sony</cite><p>50,00$</p></blockquote><div class="line"><span class="text">KKKKKKK</span><span class="meta"><time>21:40</time><svg class="ticks"><use href="#ticks"/></svg></span></div></li>
        <li class="bubble out"><blockquote><cite>Sony</cite><p>50,00$</p></blockquote><div class="line"><span class="text">Não queima não?</span><span class="meta"><time>21:40</time><svg class="ticks"><use href="#ticks"/></svg></span></div></li>
        <li class="bubble in first"><svg class="tail"><use href="#tail-in"/></svg><blockquote><cite>Você</cite><p>Fake chat?</p></blockquote><div class="line"><span class="text">Nem precisa de fake chat</span><span class="meta"><time>21:40</time></span></div></li>
        <li class="bubble in"><blockquote><cite>Você</cite><p>Não queima não?</p></blockquote><div class="line"><span class="text">Não</span><span class="meta"><time>21:40</time></span></div></li>
        <li class="bubble out first"><svg class="tail"><use href="#tail-out"/></svg><div class="line"><span class="text">Tem uma mano querendo comprar</span><span class="meta"><time>21:40</time><svg class="ticks"><use href="#ticks"/></svg></span></div></li>
        <li class="bubble out"><blockquote><cite>Sony</cite><p>Nem precisa de fake chat</p></blockquote><div class="line"><span class="text">Pdpa</span><span class="meta"><time>21:40</time><svg class="ticks"><use href="#ticks"/></svg></span></div></li>
        <li class="bubble in first"><svg class="tail"><use href="#tail-in"/></svg><blockquote><cite>Você</cite><p>Tem uma mano querendo comprar</p></blockquote><div class="line"><span class="text">Eu vendo</span><span class="meta"><time>21:40</time></span></div></li>
        <li class="bubble out first wide"><svg class="tail"><use href="#tail-out"/></svg><blockquote><cite>Sony</cite></blockquote></li>
      </ol>
      <span class="scrollbar"></span>
      <button class="jump" aria-label="Ir para o fim"><svg width="18" height="20" viewBox="0 0 18 20" fill="none" stroke="currentColor" stroke-width="2.500"><path d="M1 1L9 9L17 1M1 10L9 18L17 10"/></svg></button>
    </div>
    <form class="composer">
      <div class="field">
        <button type="button" class="icon-button" aria-label="Figurinhas"><svg width="30" height="30" viewBox="0 0 30 30" fill="none" stroke="currentColor" stroke-width="2.600" stroke-linejoin="round"><path d="M10 2H20Q28 2 28 10V17Q26 25 18 28H10Q2 28 2 20V10Q2 2 10 2M7 16.500Q12 19 17 18H28M17 18Q20 22 18 28"/><path d="M12 18H18V22Q12 24 12 18" fill="currentColor" stroke-width="1"/><circle cx="10" cy="10.500" r="1.300" fill="currentColor" stroke-width="1.500"/><circle cx="20" cy="10.500" r="1.300" fill="currentColor" stroke-width="1.500"/></svg></button>
        <span class="caret"></span>
        <input type="text" placeholder="Mensagem" aria-label="Mensagem">
        <button type="button" class="icon-button" aria-label="Anexar"><svg width="20" height="30" viewBox="0 0 20 30" fill="none" stroke="currentColor" stroke-width="2.500"><path d="M18 7V21Q18 28.500 10 28.500Q2 28.500 2 21V7.500Q2 1.500 8 1.500Q14 1.500 14 7.500V20Q14 24 10.500 24Q7 24 7 20V8"/></svg></button>
        <button type="button" class="icon-button" aria-label="Câmera"><svg width="30" height="28" viewBox="0 0 30 28" fill="none" stroke="currentColor" stroke-width="2.800" stroke-linejoin="round"><path d="M2 5H8L10.500 2H19.500L22 5H28V26H2Z"/><circle cx="15" cy="15" r="5.500"/></svg></button>
      </div>
      <button type="button" class="mic" aria-label="Mensagem de voz"><svg width="22" height="28" viewBox="0 0 22 28"><rect x="7" y="0" width="8" height="17" rx="4" fill="currentColor"/><path d="M2 13Q2 22 11 22Q20 22 20 13M11 22V28" fill="none" stroke="currentColor" stroke-width="2.600"/></svg></button>
    </form>
  </main>
  <div class="navbar"><span></span></div>
</div>
</body>
</html>
```
FILE: styles.css
```css
* { box-sizing: border-box; }

body {
  margin: 0;
  background: #0b1014;
  color: #f7f8fa;
  font-family: Inter, "Open Sans", sans-serif;
}

h1, p, ol, blockquote { margin: 0; padding: 0; }
ol { list-style: none; }
cite { font-style: normal; display: block; }
svg { display: block; flex: none; }

.defs { position: absolute; width: 0; height: 0; }

.icon-button {
  display: flex;
  padding: 0;
  border: 0;
  background: none;
  color: inherit;
}

.phone { display: flex; flex-direction: column; height: 100vh; }

.status {
  display: flex;
  justify-content: space-between;
  align-items: center;
  height: 62px;
  padding: 0 30px;
}

.clock, .battery { font-size: 19px; }
.status-icons { display: flex; align-items: center; gap: 8px; }
.battery { display: flex; align-items: center; gap: 2px; }

.volte {
  display: flex;
  flex-direction: column;
  margin-left: 3px;
  font-size: 9px;
  line-height: 9px;
  font-weight: 700;
}
.volte span { display: flex; }

.header {
  display: flex;
  align-items: center;
  height: 81px;
  padding: 0 28px 0 13px;
  border-bottom: 1px solid #161c20;
}

.avatar { width: 50px; height: 50px; margin: 0 13px 0 4px; }
.contact { flex: 1; padding-top: 5px; }
.contact h1 { font-size: 24px; line-height: 28px; font-weight: 400; }
.contact p { font-size: 17px; line-height: 26px; }
.actions { display: flex; align-items: center; gap: 41px; }

.chat {
  position: relative;
  display: flex;
  flex: 1;
  flex-direction: column;
  min-height: 0;
}

.wallpaper {
  position: absolute;
  inset: 0;
  width: 100%;
  height: 100%;
  fill: none;
  stroke: #1f262a;
  stroke-width: 5;
  stroke-linecap: round;
  stroke-linejoin: round;
}
.wallpaper text { stroke-width: 3; }

.scroller { position: relative; flex: 1; min-height: 0; overflow: hidden; }

.messages {
  display: flex;
  flex-direction: column;
  gap: 3px;
  margin-top: -42px;
  padding: 0 24px 0 25px;
}

.bubble {
  position: relative;
  padding: 5px;
  border-radius: 16px;
}

.out { align-self: flex-end; background: #144d37; color: #144d37; }
.in { align-self: flex-start; background: #1f272a; color: #1f272a; }
.first { margin-top: 11px; }
.out.first { border-top-right-radius: 0; }
.in.first { border-top-left-radius: 0; }
.stub { width: 63%; height: 47px; }
.wide { width: 81%; }

.tail { position: absolute; top: 0; width: 24px; height: 14px; }
.out .tail { right: -10px; }
.in .tail { left: -10px; }

.line {
  display: flex;
  justify-content: space-between;
  height: 37px;
  padding: 0 8px;
  color: #f7f8fa;
}

.text { font-size: 22px; line-height: 34px; white-space: nowrap; }

.meta {
  display: flex;
  align-items: flex-end;
  gap: 6px;
  margin-left: 12px;
  font-size: 17px;
  line-height: 20px;
  color: #85a598;
}
.in .meta { margin-left: 20px; color: #868d91; }
.in .line { padding-right: 6px; }

.ticks { width: 24px; height: 16px; margin-bottom: 3px; }

blockquote {
  position: relative;
  height: 68px;
  margin: 1px 0 3px;
  padding: 9px 13px 0 18px;
  border-radius: 12px;
  background: linear-gradient(to right, #a791ff 6px, #14412f 6px);
  font-size: 19px;
  line-height: 27px;
  color: #7e9c90;
  white-space: nowrap;
}
blockquote cite { color: #c9c2fb; }
.in blockquote { background: linear-gradient(to right, #21c063 6px, #1c2329 6px); color: #7c858b; }
.in cite { color: #91dfb0; }

.scrollbar {
  position: absolute;
  top: 67%;
  right: 0;
  width: 6px;
  height: 315px;
  background: #484c4f;
}

.jump {
  position: absolute;
  right: 18px;
  bottom: 22px;
  display: flex;
  align-items: center;
  justify-content: center;
  width: 46px;
  height: 46px;
  padding: 0;
  border: 0;
  border-radius: 50%;
  background: #242f37;
  color: #a5aeb3;
  box-shadow: 0 1px 3px #0b1014;
}

.composer {
  position: relative;
  display: flex;
  align-items: center;
  gap: 6px;
  padding: 7px 6px 7px 8px;
}

.field {
  position: relative;
  display: flex;
  flex: 1;
  align-items: center;
  height: 68px;
  padding: 0 21px 0 15px;
  border-radius: 34px;
  background: #1f272a;
  color: #969b9e;
}

.caret { width: 3px; height: 35px; margin-left: 16px; background: #21c063; }

input {
  flex: 1;
  min-width: 0;
  padding: 0;
  border: 0;
  outline: 0;
  background: none;
  color: #f7f8fa;
  font: 25px Inter, "Open Sans", sans-serif;
}
input::placeholder { color: #868c8f; opacity: 1; }
input + .icon-button { margin-right: 43px; }

.mic {
  display: flex;
  align-items: center;
  justify-content: center;
  width: 67px;
  height: 67px;
  padding: 0;
  border: 0;
  border-radius: 50%;
  background: #21c063;
  color: #0b1014;
}

.navbar {
  display: flex;
  justify-content: center;
  height: 35px;
  padding-top: 15px;
  background: #000;
}
.navbar span { width: 173px; height: 6px; border-radius: 3px; background: #909090; }
```
